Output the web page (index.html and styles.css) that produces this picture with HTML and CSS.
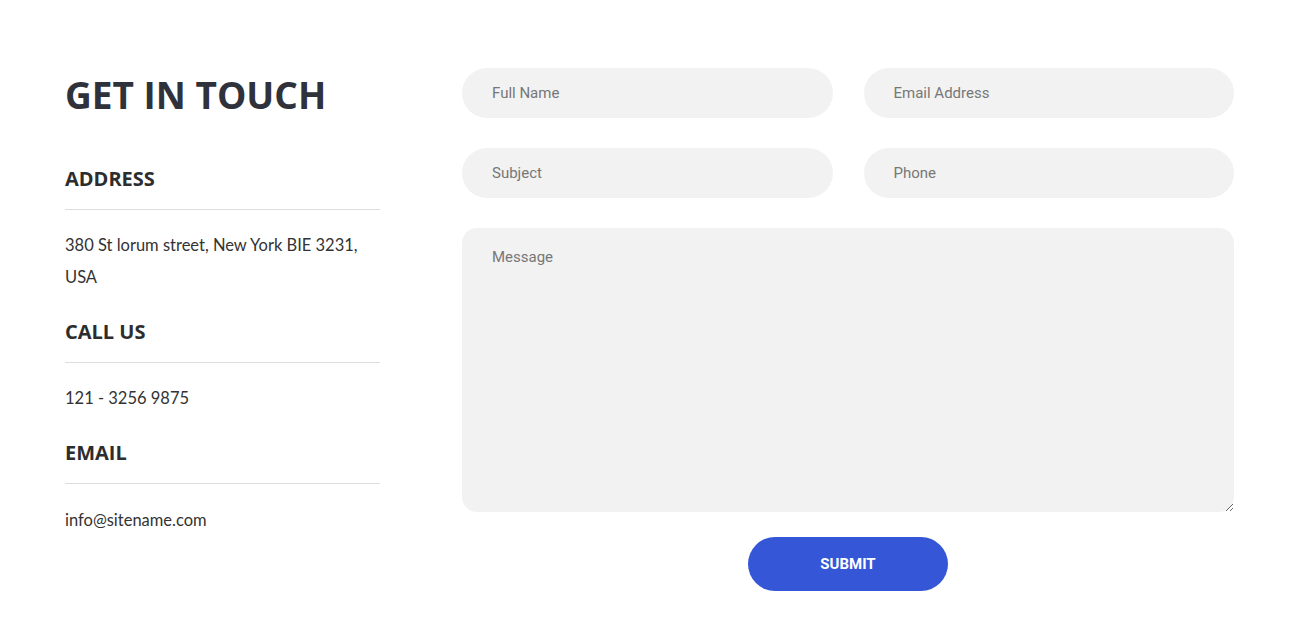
FILE: index.html
```html
<!DOCTYPE html>
<html lang="en">
<head>
<meta charset="utf-8">
<title>Contact</title>
<link rel="stylesheet" href="styles.css">
</head>
<body>
<section class="contact">
  <div class="info">
    <h2 class="title">GET IN TOUCH</h2>
    <h4 class="label">ADDRESS</h4>
    <p class="text">380 St lorum street, New York BIE 3231, USA</p>
    <h4 class="label">CALL US</h4>
    <p class="text">121 - 3256 9875</p>
    <h4 class="label">EMAIL</h4>
    <p class="text">info@sitename.com</p>
  </div>
  <form class="form">
    <div class="row">
      <input class="field" type="text" placeholder="Full Name">
      <input class="field" type="text" placeholder="Email Address">
    </div>
    <div class="row">
      <input class="field" type="text" placeholder="Subject">
      <input class="field" type="text" placeholder="Phone">
    </div>
    <textarea class="message" placeholder="Message"></textarea>
    <div class="actions">
      <button class="submit" type="button">SUBMIT</button>
    </div>
  </form>
</section>
</body>
</html>
```
FILE: styles.css
```css
* { box-sizing: border-box; }
html, body { margin: 0; padding: 0; background: #fff; }
body { font-family: "Open Sans", "Liberation Sans", sans-serif; color: #333; }

.contact {
  display: flex;
  padding: 68px 75px 0 65px;
  gap: 82px;
}

.info { width: 315px; flex: none; }

.title {
  margin: 3px 0 48px;
  font-family: "Open Sans", sans-serif;
  font-weight: 700;
  font-size: 37px;
  line-height: 48px;
  color: #2f323a;
}

.label {
  margin: 0;
  padding-bottom: 18px;
  border-bottom: 1px solid #ddd;
  font-family: "Open Sans", sans-serif;
  font-weight: 700;
  font-size: 20px;
  line-height: 24px;
  color: #2d2d2d;
}

.text {
  margin: 19px 0 27px;
  font-family: "Lato", sans-serif;
  font-size: 16.5px;
  line-height: 32px;
  color: #333;
}

.text:last-child { margin-top: 20px; }

.form { flex: 1; display: flex; flex-direction: column; }

.row {
  display: flex;
  gap: 31px;
  margin-bottom: 30px;
}

.field {
  flex: 1;
  min-width: 0;
  height: 50px;
  border: none;
  border-radius: 25px;
  background: #f2f2f2;
  padding: 0 30px;
  font-family: Roboto, sans-serif;
  font-size: 15px;
  color: #333;
  outline: none;
}

.field::placeholder, .message::placeholder { color: #777; }

.message {
  height: 284px;
  border: none;
  border-radius: 15px;
  background: #f2f2f2;
  padding: 20px 30px;
  font-family: Roboto, sans-serif;
  font-size: 15px;
  line-height: 18px;
  color: #333;
  outline: none;
  resize: vertical;
}

.actions {
  display: flex;
  justify-content: center;
  padding-top: 25px;
}

.submit {
  width: 200px;
  height: 54px;
  border: none;
  border-radius: 27px;
  background: #3556d6;
  color: #fff;
  font-family: Roboto, sans-serif;
  font-weight: 700;
  font-size: 15px;
  cursor: pointer;
}
```
